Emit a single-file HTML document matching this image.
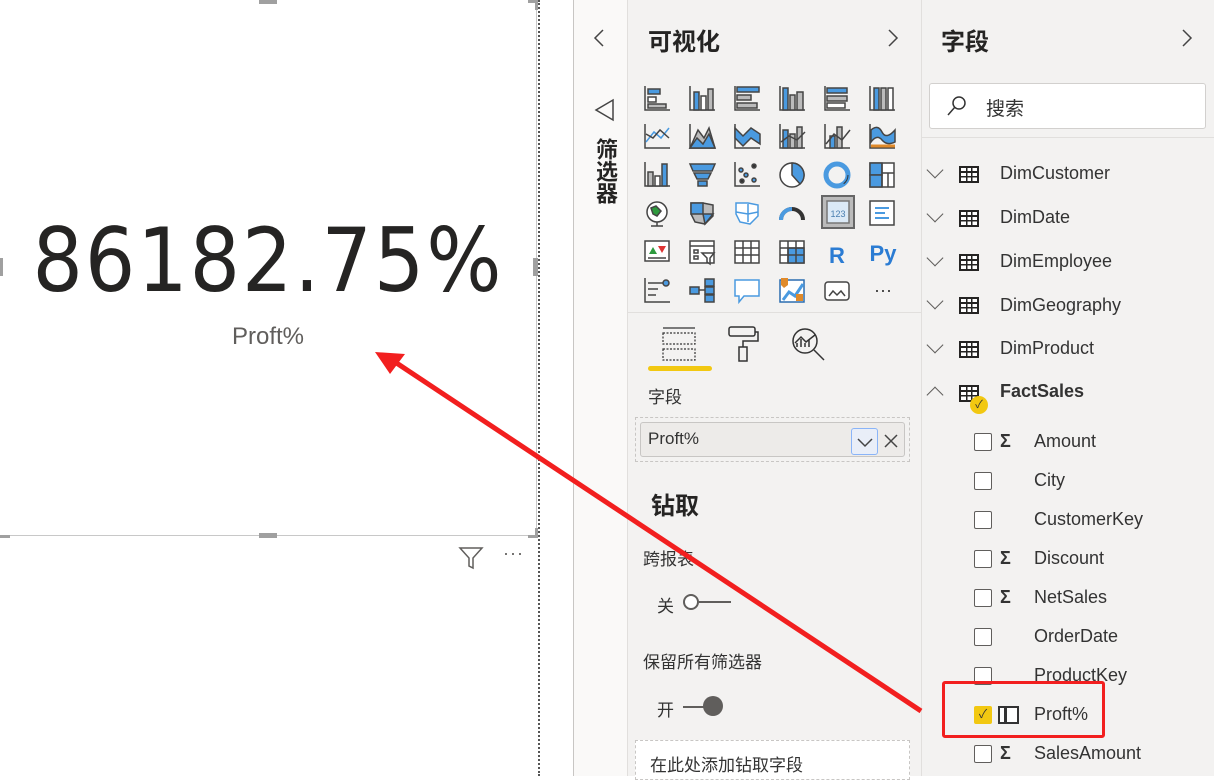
<!DOCTYPE html>
<html><head><meta charset="utf-8">
<style>
*{margin:0;padding:0;box-sizing:border-box}
body{width:1214px;height:776px;overflow:hidden;background:#fff;position:relative;font-family:"Segoe UI","Liberation Sans","Noto Sans CJK SC",sans-serif;color:#252423}
.a{position:absolute}
.cn{font-family:"Liberation Sans","Noto Sans CJK SC",sans-serif}
.fld{position:absolute;left:1000px;font-size:18px;color:#333}
.chk{position:absolute;left:974px;width:18px;height:18px;border:1.5px solid #605e5c;border-radius:2px;background:#fff}
.sig{position:absolute;left:1000px;font-size:18px;font-weight:bold;color:#333}
.tb{position:absolute;left:959px;width:20px;height:17px;border:2px solid #252423;background:
linear-gradient(#252423,#252423) 0 3px/100% 2px no-repeat,
linear-gradient(#252423,#252423) 0 8px/100% 1.5px no-repeat,
linear-gradient(#252423,#252423) 5px 0/1.5px 100% no-repeat,
linear-gradient(#252423,#252423) 10px 0/1.5px 100% no-repeat,#fff}
.cv{position:absolute;left:929px;width:12px;height:12px;border-right:1.5px solid #605e5c;border-bottom:1.5px solid #605e5c;transform:rotate(45deg)}
</style></head><body>

<!-- canvas visual -->
<div class="a" style="left:0;top:0;width:537px;height:536px;border-right:1px solid #c8c8c8;border-bottom:1px solid #c8c8c8"></div>
<div class="a" style="left:259px;top:0;width:18px;height:4px;background:#a0a0a0"></div>
<div class="a" style="left:259px;top:533px;width:18px;height:5px;background:#a0a0a0"></div>
<div class="a" style="left:533px;top:258px;width:5px;height:18px;background:#a0a0a0"></div>
<div class="a" style="left:0;top:258px;width:3px;height:18px;background:#a0a0a0"></div>
<div class="a" style="left:0;top:530px;width:10px;height:8px;border-bottom:3px solid #a0a0a0"></div>
<div class="a" style="left:528px;top:528px;width:10px;height:10px;border-right:3px solid #a0a0a0;border-bottom:3px solid #a0a0a0"></div>
<div class="a" style="left:528px;top:0;width:10px;height:10px;border-right:3px solid #a0a0a0;border-top:3px solid #a0a0a0"></div>
<div class="a" style="left:538px;top:0;width:0;height:776px;border-left:2px dotted #555"></div>
<div class="a" style="left:0;top:201px;width:536px;text-align:center;font-family:'Liberation Sans Narrow','DejaVu Sans Condensed','Liberation Sans',sans-serif;font-size:88px;line-height:120px;color:#252423;letter-spacing:2px">86182.75%</div>
<div class="a" style="left:0;top:323px;width:536px;text-align:center;font-size:24px;color:#605e5c">Proft%</div>
<svg class="a" style="left:458px;top:545px" width="26" height="26" viewBox="0 0 26 26"><path d="M2 3H24L15 13V23L11 21V13Z" fill="none" stroke="#605e5c" stroke-width="1.5"/></svg>
<div class="a" style="left:503px;top:543px;font-size:18px;color:#605e5c;letter-spacing:1px">···</div>

<!-- filter strip -->
<div class="a" style="left:573px;top:0;width:54px;height:776px;background:#faf9f8;border-left:1px solid #c8c6c4"></div>
<svg class="a" style="left:592px;top:28px" width="14" height="20"><path d="M11 2L3 10L11 18" fill="none" stroke="#444" stroke-width="1.5"/></svg>
<svg class="a" style="left:593px;top:98px" width="22" height="24"><path d="M20 2V22L3 12Z" fill="none" stroke="#444" stroke-width="1.5"/></svg>
<div class="a cn" style="left:588px;top:138px;width:30px;font-size:22px;font-weight:bold;line-height:26px;writing-mode:vertical-rl;color:#252423">筛选器</div>

<!-- visualizations -->
<div class="a" style="left:627px;top:0;width:294px;height:776px;background:#f3f2f1;border-left:1px solid #e1dfdd"></div>
<div class="a cn" style="left:648px;top:22px;font-size:24px;font-weight:bold;color:#252423">可视化</div>
<svg class="a" style="left:886px;top:28px" width="14" height="20"><path d="M3 2L11 10L3 18" fill="none" stroke="#444" stroke-width="1.5"/></svg>
<svg class="a" style="left:640px;top:82px" width="260" height="230" viewBox="0 0 260 230">
<g fill="none" stroke="#444" stroke-width="1.5">
<g transform="translate(4,4)"><path d="M1 0V24H26"/><rect x="4" y="3" width="12" height="5" fill="#4a9ae0"/><rect x="4" y="11" width="8" height="5" fill="#fff"/><rect x="4" y="18" width="18" height="4" fill="#bbb"/></g>
<g transform="translate(49,4)"><path d="M1 0V24H26"/><rect x="5" y="6" width="5" height="18" fill="#4a9ae0"/><rect x="12" y="10" width="5" height="14" fill="#fff"/><rect x="19" y="3" width="5" height="21" fill="#bbb"/></g>
<g transform="translate(94,4)"><path d="M1 0V24H26"/><rect x="3" y="1" width="22" height="5" fill="#4a9ae0"/><rect x="3" y="9" width="14" height="5" fill="#bbb"/><rect x="3" y="17" width="20" height="5" fill="#bbb"/></g>
<g transform="translate(139,4)"><path d="M1 0V24H26"/><rect x="4" y="2" width="5" height="22" fill="#4a9ae0"/><rect x="11" y="9" width="5" height="15" fill="#bbb"/><rect x="18" y="6" width="6" height="18" fill="#bbb"/></g>
<g transform="translate(184,4)"><path d="M1 0V24H26"/><rect x="3" y="2" width="20" height="5" fill="#4a9ae0"/><rect x="3" y="10" width="20" height="5" fill="#bbb"/><rect x="3" y="17" width="18" height="5" fill="#fff"/></g>
<g transform="translate(229,4)"><path d="M1 0V24H26"/><rect x="5" y="2" width="5" height="22" fill="#4a9ae0"/><rect x="12" y="2" width="5" height="22" fill="#bbb"/><rect x="19" y="2" width="5" height="22" fill="#fff"/></g>
<g transform="translate(4,42)"><path d="M1 0V24H26"/><path d="M2 18L10 8L17 14L25 4" stroke="#4a9ae0"/><path d="M2 10L9 14L16 6L25 14"/></g>
<g transform="translate(49,42)"><path d="M1 0V24H26"/><path d="M1 24L9 6L15 14L20 4L26 24Z" fill="#bbb"/><path d="M1 24L8 14L14 20L20 10L26 24Z" fill="#4a9ae0"/></g>
<g transform="translate(94,42)"><path d="M1 0V24H26"/><path d="M1 4L9 12L17 4L26 10V20L17 14L9 22L1 14Z" fill="#4a9ae0"/></g>
<g transform="translate(139,42)"><path d="M1 0V24H26"/><rect x="4" y="6" width="5" height="18" fill="#4a9ae0"/><rect x="11" y="10" width="5" height="14" fill="#bbb"/><rect x="18" y="3" width="5" height="21" fill="#bbb"/><path d="M2 18L10 12L18 16L26 8"/></g>
<g transform="translate(184,42)"><path d="M1 0V24H26"/><rect x="6" y="12" width="5" height="12" fill="#4a9ae0"/><rect x="13" y="3" width="5" height="21" fill="#bbb"/><path d="M2 20L10 10L18 16L26 6"/></g>
<g transform="translate(229,42)"><path d="M1 0V24H26"/><path d="M2 6Q9 0 13 8T26 6V18Q18 22 13 16T2 18Z" fill="#4a9ae0"/><path d="M2 22H26" stroke="#e08a2a" stroke-width="3"/></g>
<g transform="translate(4,80)"><path d="M1 0V24H26"/><rect x="4" y="10" width="5" height="14" fill="#bbb"/><rect x="11" y="14" width="5" height="10" fill="#fff"/><rect x="18" y="2" width="5" height="22" fill="#4a9ae0"/></g>
<g transform="translate(49,80)"><path d="M1 2H26L23 9H4Z" fill="#4a9ae0"/><path d="M5 11H22L19 17H8Z" fill="#4a9ae0"/><path d="M9 19H18V24H9Z" fill="#4a9ae0"/></g>
<g transform="translate(94,80)"><path d="M1 0V24H26"/><circle cx="7" cy="8" r="2" fill="#4a9ae0"/><circle cx="12" cy="13" r="2" fill="#4a9ae0"/><circle cx="20" cy="4" r="2" fill="#333"/><circle cx="8" cy="19" r="2" fill="#333"/><circle cx="20" cy="18" r="2" fill="#4a9ae0"/></g>
<g transform="translate(139,80)"><circle cx="13" cy="13" r="12" fill="#fff"/><path d="M13 1A12 12 0 0 1 21 22L13 13Z" fill="#4a9ae0"/></g>
<g transform="translate(184,80)"><circle cx="13" cy="13" r="11" stroke="#4a9ae0" stroke-width="5"/><circle cx="13" cy="13" r="11" stroke="#333" stroke-width="1" stroke-dasharray="10 60"/></g>
<g transform="translate(229,80)"><rect x="1" y="1" width="24" height="24" fill="#fff"/><rect x="1" y="1" width="12" height="12" fill="#4a9ae0"/><rect x="1" y="13" width="12" height="12" fill="#4a9ae0"/><path d="M13 1V25M13 11H25M19 11V25"/></g>
<g transform="translate(4,118)"><circle cx="13" cy="12" r="10" fill="#fff"/><path d="M7 8L12 6L17 11L13 16L9 14Z" fill="#2e9a3e"/><path d="M7 26H19M13 22V26"/></g>
<g transform="translate(49,118)"><path d="M2 3H14L24 5V16L16 24L6 22L2 14Z" fill="#bbb"/><path d="M2 3H14V14H2Z" fill="#4a9ae0"/><path d="M14 14H24L16 24Z" fill="#4a9ae0"/></g>
<g transform="translate(94,118)"><path d="M2 3H14L24 5V16L16 24L6 22L2 14Z" fill="#fff" stroke="#4a9ae0"/><path d="M2 12L14 14L24 12M14 4V22" stroke="#4a9ae0"/></g>
<g transform="translate(139,118)"><path d="M2 20A11 11 0 0 1 24 20" stroke="#333" stroke-width="4"/><path d="M2 20A11 11 0 0 1 13 9" stroke="#4a9ae0" stroke-width="4"/></g>
<g transform="translate(182,114)"><rect x="0" y="0" width="32" height="32" fill="#bbb" stroke="#666" stroke-width="2"/><rect x="5" y="5" width="22" height="22" fill="#dbe9f6" stroke="#777"/><text x="16" y="21" font-size="9" text-anchor="middle" fill="#4a7fb0" stroke="none" font-family="Liberation Sans">123</text></g>
<g transform="translate(229,118)"><rect x="1" y="1" width="24" height="24" fill="#fff"/><path d="M6 8H20M6 13H16M6 18H20" stroke="#4a9ae0" stroke-width="2"/></g>
<g transform="translate(4,158)"><rect x="1" y="1" width="24" height="20" fill="#fff"/><path d="M5 14L9 7L13 14Z" fill="#2e9a3e" stroke="none"/><path d="M14 6H22L18 13Z" fill="#d33" stroke="none"/><path d="M4 18H22"/></g>
<g transform="translate(49,158)"><rect x="1" y="1" width="24" height="22" fill="#fff"/><path d="M1 6H25"/><rect x="5" y="10" width="4" height="3"/><rect x="5" y="16" width="4" height="3"/><path d="M13 13H25L21 18V24L18 22V18Z" fill="#fff"/></g>
<g transform="translate(94,158)"><rect x="1" y="1" width="24" height="22" fill="#fff"/><path d="M1 8H25M1 15H25M9 1V23M17 1V23"/></g>
<g transform="translate(139,158)"><rect x="1" y="1" width="24" height="22" fill="#fff"/><rect x="9" y="8" width="16" height="15" fill="#4a9ae0"/><path d="M1 8H25M1 15H25M9 1V23M17 1V23"/></g>
<text x="197" y="181" font-size="22" font-weight="bold" fill="#2b7cd3" stroke="none" text-anchor="middle" font-family="Liberation Sans">R</text>
<text x="243" y="179" font-size="22" font-weight="bold" fill="#2b7cd3" stroke="none" text-anchor="middle" font-family="Liberation Sans">Py</text>
<g transform="translate(4,196)"><path d="M1 0V24H26"/><path d="M4 5H20M4 11H14M4 17H12"/><circle cx="22" cy="5" r="3" fill="#4a9ae0"/></g>
<g transform="translate(49,196)"><rect x="1" y="9" width="9" height="7" fill="#4a9ae0"/><rect x="16" y="1" width="9" height="7" fill="#4a9ae0"/><rect x="16" y="9" width="9" height="7" fill="#4a9ae0"/><rect x="16" y="17" width="9" height="7" fill="#4a9ae0"/><path d="M10 12H16"/></g>
<g transform="translate(94,196)"><path d="M1 2H25V18H10L5 24V18H1Z" fill="#fff" stroke="#4a9ae0"/></g>
<g transform="translate(139,196)"><rect x="1" y="2" width="24" height="22" fill="#fff" stroke="#2b6cb0"/><path d="M4 22L10 14L16 18L24 6" stroke="#4a9ae0" stroke-width="3"/><path d="M2 0H9V7L5 10L2 7Z" fill="#e08a2a" stroke="none"/><rect x="17" y="16" width="7" height="7" fill="#e08a2a" stroke="none"/></g>
<g transform="translate(184,196)"><rect x="1" y="4" width="24" height="18" rx="3" fill="#fff"/><path d="M5 18L9 13L13 17L17 13L21 18"/></g>
<text x="243" y="214" font-size="18" fill="#333" stroke="none" text-anchor="middle" font-family="Liberation Sans">···</text>
</g></svg>
<div class="a" style="left:627px;top:312px;width:294px;height:1px;background:#e1dfdd"></div>
<svg class="a" style="left:660px;top:325px" width="40" height="40"><g fill="none" stroke="#333" stroke-width="1.2" stroke-dasharray="2 1.5"><rect x="3" y="8" width="32" height="11"/><rect x="3" y="24" width="32" height="11"/></g><path d="M3 3H35" stroke="#333" stroke-width="1.2"/></svg>
<div class="a" style="left:648px;top:366px;width:64px;height:5px;background:#f2c811;border-radius:3px"></div>
<svg class="a" style="left:726px;top:325px" width="36" height="40"><g fill="none" stroke="#333" stroke-width="1.5"><rect x="3" y="2" width="26" height="9" rx="2"/><path d="M29 7H32V16H17V22"/><rect x="13" y="22" width="8" height="14"/></g></svg>
<svg class="a" style="left:790px;top:325px" width="40" height="40"><g fill="none" stroke="#333" stroke-width="1.5"><circle cx="15" cy="16" r="12"/><path d="M24 25L34 35M7 22V18M11 22V14M15 22V18M19 22V15M5 18L11 12L16 17L25 10"/></g></svg>

<div class="a cn" style="left:648px;top:383px;font-size:17px;color:#333">字段</div>
<div class="a" style="left:635px;top:417px;width:275px;height:45px;border:1px dashed #c8c6c4"></div>
<div class="a" style="left:640px;top:422px;width:265px;height:35px;border:1px solid #c8c6c4;border-radius:3px;background:#edebe9"></div>
<div class="a" style="left:648px;top:429px;font-size:17px;color:#333">Proft%</div>
<div class="a" style="left:851px;top:428px;width:27px;height:27px;border:1.5px solid #8ab4f8;border-radius:3px;background:#e9eef8"></div>
<svg class="a" style="left:852px;top:430px" width="26" height="24"><path d="M6 9L13 16L20 9" fill="none" stroke="#444" stroke-width="1.5"/></svg>
<svg class="a" style="left:882px;top:432px" width="18" height="18"><path d="M3 3L15 15M15 3L3 15" stroke="#444" stroke-width="1.5"/></svg>
<div class="a cn" style="left:651px;top:486px;font-size:24px;font-weight:bold;color:#252423">钻取</div>
<div class="a cn" style="left:643px;top:545px;font-size:17px;color:#333">跨报表</div>
<div class="a cn" style="left:657px;top:592px;font-size:17px;color:#333">关</div>
<div class="a" style="left:683px;top:594px;width:16px;height:16px;border:2px solid #605e5c;border-radius:50%;background:#fff"></div>
<div class="a" style="left:699px;top:601px;width:32px;height:2px;background:#605e5c"></div>
<div class="a cn" style="left:643px;top:648px;font-size:17px;color:#333">保留所有筛选器</div>
<div class="a cn" style="left:657px;top:696px;font-size:17px;color:#333">开</div>
<div class="a" style="left:683px;top:706px;width:22px;height:2px;background:#605e5c"></div>
<div class="a" style="left:703px;top:696px;width:20px;height:20px;border-radius:50%;background:#605e5c"></div>
<div class="a" style="left:635px;top:740px;width:275px;height:40px;border:1px dashed #c8c6c4;background:#fff"></div>
<div class="a cn" style="left:650px;top:751px;font-size:17px;color:#333">在此处添加钻取字段</div>

<!-- fields -->
<div class="a" style="left:921px;top:0;width:293px;height:776px;background:#f3f2f1;border-left:1px solid #e1dfdd"></div>
<div class="a cn" style="left:941px;top:22px;font-size:24px;font-weight:bold;color:#252423">字段</div>
<svg class="a" style="left:1180px;top:28px" width="14" height="20"><path d="M3 2L11 10L3 18" fill="none" stroke="#444" stroke-width="1.5"/></svg>
<div class="a" style="left:929px;top:83px;width:277px;height:46px;background:#fff;border:1px solid #d2d0ce;border-radius:3px"></div>
<svg class="a" style="left:945px;top:94px" width="24" height="24"><circle cx="14" cy="9" r="6" fill="none" stroke="#333" stroke-width="1.5"/><path d="M10 13L3 21" stroke="#333" stroke-width="1.5"/></svg>
<div class="a cn" style="left:986px;top:94px;font-size:19px;color:#333">搜索</div>
<div class="a" style="left:921px;top:137px;width:293px;height:1px;background:#e1dfdd"></div>

<div class="cv" style="top:164px"></div><div class="tb" style="top:166px"></div><div class="fld" style="top:163px">DimCustomer</div>
<div class="cv" style="top:208px"></div><div class="tb" style="top:210px"></div><div class="fld" style="top:207px">DimDate</div>
<div class="cv" style="top:252px"></div><div class="tb" style="top:254px"></div><div class="fld" style="top:251px">DimEmployee</div>
<div class="cv" style="top:295px"></div><div class="tb" style="top:297px"></div><div class="fld" style="top:295px">DimGeography</div>
<div class="cv" style="top:339px"></div><div class="tb" style="top:341px"></div><div class="fld" style="top:338px">DimProduct</div>
<div class="a" style="left:929px;top:389px;width:12px;height:12px;border-left:1.5px solid #605e5c;border-top:1.5px solid #605e5c;transform:rotate(45deg)"></div>
<div class="tb" style="top:385px"></div>
<div class="a" style="left:970px;top:396px;width:18px;height:18px;border-radius:50%;background:#f2c811;color:#333;font-size:11px;text-align:center;line-height:18px">✓</div>
<div class="fld" style="top:381px;font-weight:bold">FactSales</div>

<div class="chk" style="top:433px"></div><div class="sig" style="top:431px">Σ</div><div class="fld" style="left:1034px;top:431px">Amount</div>
<div class="chk" style="top:472px"></div><div class="fld" style="left:1034px;top:470px">City</div>
<div class="chk" style="top:511px"></div><div class="fld" style="left:1034px;top:509px">CustomerKey</div>
<div class="chk" style="top:550px"></div><div class="sig" style="top:548px">Σ</div><div class="fld" style="left:1034px;top:548px">Discount</div>
<div class="chk" style="top:589px"></div><div class="sig" style="top:587px">Σ</div><div class="fld" style="left:1034px;top:587px">NetSales</div>
<div class="chk" style="top:628px"></div><div class="fld" style="left:1034px;top:626px">OrderDate</div>
<div class="chk" style="top:667px"></div><div class="fld" style="left:1034px;top:665px">ProductKey</div>
<div class="chk" style="top:706px;background:#f2c811;border-color:#f2c811;font-size:12px;line-height:15px;text-align:center;color:#333">✓</div>
<div class="a" style="left:998px;top:706px;width:21px;height:18px;border:2px solid #333;background:linear-gradient(#333,#333) 4px 0/3px 100% no-repeat,#fff"></div>
<div class="fld" style="left:1034px;top:704px">Proft%</div>
<div class="chk" style="top:745px"></div><div class="sig" style="top:743px">Σ</div><div class="fld" style="left:1034px;top:743px">SalesAmount</div>

<!-- red annotation -->
<div class="a" style="left:942px;top:681px;width:163px;height:57px;border:3px solid #f21f1f;border-radius:3px"></div>
<svg class="a" style="left:0;top:0" width="1214" height="776"><path d="M921 711L395 362" stroke="#f21f1f" stroke-width="5"/><path d="M375 352L405 354L390 374Z" fill="#f21f1f"/></svg>
</body></html>
